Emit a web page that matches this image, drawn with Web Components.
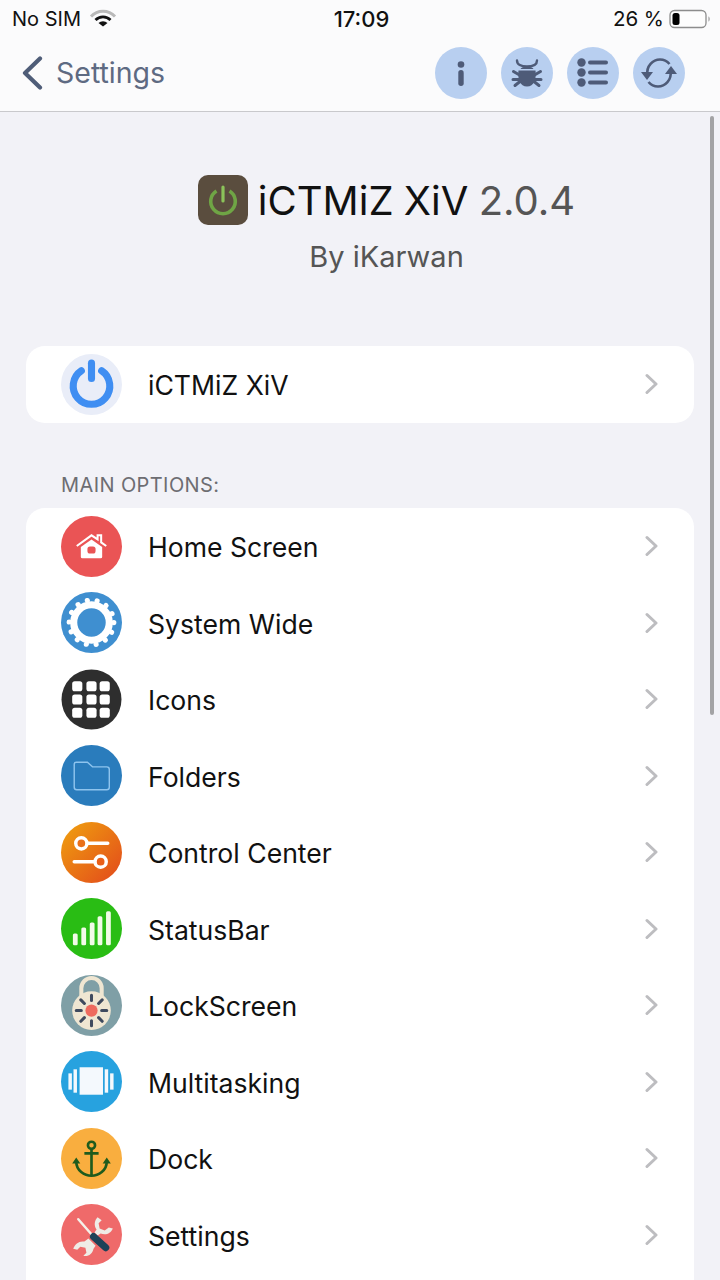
<!DOCTYPE html>
<html lang="en"><head><meta charset="utf-8"><title>iCTMiZ XiV</title>
<style>
html,body{margin:0;padding:0;background:#f2f2f7;}
body{width:720px;height:1280px;overflow:hidden;font-family:Inter,"Liberation Sans",sans-serif;position:relative;}
</style></head><body>
<app-shell>
  <nav-bar></nav-bar>
  <app-header></app-header>
  <set-group>
    <set-row label="iCTMiZ XiV"><svg viewBox="0 0 60 60"><circle cx="30" cy="30" r="30" fill="#e9edf8"/><path d="M20 16.500A18 18 0 1 0 40 16.500" fill="none" stroke="#3f8ef2" stroke-width="7" stroke-linecap="round"/><path d="M30 9V24" stroke="#3f8ef2" stroke-width="7" stroke-linecap="round"/></svg></set-row>
  </set-group>
  <set-group title="MAIN OPTIONS:">
    <set-row label="Home Screen"><svg viewBox="0 0 60 60"><circle cx="30" cy="30" r="30" fill="#ea5455"/><path d="M15.500 29.500 30 19l6 4v-4h3.500v7l5 3.500" fill="none" stroke="#fff" stroke-width="2"/><path d="M19.500 30.500 30 23l10.500 7.500V40a1.500 1.500 0 0 1-1.500 1.500H21a1.500 1.500 0 0 1-1.500-1.500z" fill="#fff"/><rect x="26" y="30" width="8" height="7" rx="2.500" fill="#ea5455"/></svg></set-row>
    <set-row label="System Wide"><svg viewBox="0 0 60 60"><circle cx="30" cy="30" r="30" fill="#3f8fd0"/><circle cx="30" cy="30" r="17.500" fill="none" stroke="#fff" stroke-width="7"/><circle cx="30" cy="30" r="22" fill="none" stroke="#fff" stroke-width="5" stroke-dasharray=".1 9.773" stroke-linecap="round"/></svg></set-row>
    <set-row label="Icons"><svg viewBox="0 0 60 60"><circle cx="30" cy="30" r="29.500" fill="#2e2e2e"/><g fill="#fff"><rect x="11" y="12" width="10" height="10" rx="2.500"/><rect x="25" y="12" width="10" height="10" rx="2.500"/><rect x="38" y="12" width="10" height="10" rx="2.500"/><rect x="11" y="25" width="10" height="10" rx="2.500"/><rect x="25" y="25" width="10" height="10" rx="2.500"/><rect x="38" y="25" width="10" height="10" rx="2.500"/><rect x="11" y="38" width="10" height="10" rx="2.500"/><rect x="25" y="38" width="10" height="10" rx="2.500"/><rect x="38" y="38" width="10" height="10" rx="2.500"/></g></svg></set-row>
    <set-row label="Folders"><svg viewBox="0 0 60 60"><circle cx="30" cy="30" r="30" fill="#2a7cbc"/><path d="M13 19a2 2 0 0 1 2-2h11l5 4.500h14a2.500 2.500 0 0 1 2.500 2.500v17.500a2.500 2.500 0 0 1-2.500 2.500H15.500a2.500 2.500 0 0 1-2.500-2.500z" fill="#2a7cbc" stroke="#8ec4ee" stroke-width="1.400"/></svg></set-row>
    <set-row label="Control Center"><svg viewBox="0 0 60 60"><defs><linearGradient id="cc" x1="0" y1="0" x2="1" y2="1"><stop offset="0" stop-color="#f0a20e"/><stop offset="1" stop-color="#e2481c"/></linearGradient></defs><circle cx="30" cy="30" r="30" fill="url(#cc)"/><path d="M26 21H46M13 39H33" stroke="#fff" stroke-width="3.400" stroke-linecap="round"/><circle cx="20" cy="21" r="5.500" fill="#e9701a" stroke="#fff" stroke-width="3.400"/><circle cx="39" cy="39" r="5.500" fill="#e9601a" stroke="#fff" stroke-width="3.400"/></svg></set-row>
    <set-row label="StatusBar"><svg viewBox="0 0 60 60"><circle cx="30" cy="30" r="30" fill="#29bd14"/><g fill="#f2fbe8"><rect x="11.700" y="35" width="4.700" height="11.500" rx="1.500"/><rect x="20" y="29" width="4.700" height="17.500" rx="1.500"/><rect x="28.300" y="24" width="4.700" height="22.500" rx="1.500"/><rect x="36" y="18" width="4.700" height="28.500" rx="1.500"/><rect x="44.300" y="13" width="4.700" height="33.500" rx="1.500"/></g></svg></set-row>
    <set-row label="LockScreen"><svg viewBox="0 0 60 60"><circle cx="30" cy="30" r="30" fill="#7f9fa6"/><path d="M20 22V13a10 10 0 0 1 20 0v9" fill="none" stroke="#efe6d2" stroke-width="4"/><circle cx="30" cy="35" r="19" fill="#efe6d2"/><circle cx="30" cy="35" r="6" fill="#ee6a5e"/><g stroke="#3f4a5e" stroke-width="3" stroke-linecap="round"><path d="M30 20v5M30 45v5M15 35h5M40 35h5M19.500 24.500l3.500 3.500M37 42l3.500 3.500M40.500 24.500 37 28M23 42l-3.500 3.500"/></g></svg></set-row>
    <set-row label="Multitasking"><svg viewBox="0 0 60 60"><circle cx="30" cy="30" r="30" fill="#27a2df"/><g fill="#f4f9fd"><rect x="18.300" y="16" width="23" height="27"/><rect x="12.300" y="18" width="3.400" height="23"/><rect x="7.300" y="22" width="3.400" height="16"/><rect x="43" y="18" width="3.400" height="23"/><rect x="48.300" y="22" width="3.400" height="16"/></g></svg></set-row>
    <set-row label="Dock"><svg viewBox="0 0 60 60"><circle cx="30" cy="30" r="30" fill="#f9ae3f"/><g fill="none" stroke="#1f5b1d" stroke-width="2.600"><circle cx="30" cy="17" r="3.500"/><path d="M30 21V47M23 25H37"/><path d="M15 33c0 9 8 14 15 14s15-5 15-14"/></g><path d="M15 29l-4 6h8zM45 29l-4 6h8z" fill="#1f5b1d"/></svg></set-row>
    <set-row label="Settings"><svg viewBox="0 0 60 60"><circle cx="30" cy="30" r="30" fill="#ef6a6a"/><path d="M36 13c-3 3-4 8-1 12l-2 3 3 3 3-2c5 2 10 0 12-5l-4-1-4 3-5-2-1-5 3-3z" fill="#efece6"/><path d="M27 34 23 37c-5-1-9 2-11 7l4 1 3-3 5 1 1 5-3 3c5 1 9-2 10-7l2-3z" fill="#efece6"/><path d="M17 15 31 31" stroke="#f4f1ea" stroke-width="2.400" stroke-linecap="round"/><path d="M32 32 44 43" stroke="#1e4258" stroke-width="7" stroke-linecap="round"/></svg></set-row>
    <set-row label=""></set-row>
  </set-group>
</app-shell>
<scroll-thumb></scroll-thumb>
<script>
function def(name,html){
  customElements.define(name,class extends HTMLElement{
    connectedCallback(){
      if(this.shadowRoot)return;
      const r=this.attachShadow({mode:'open'});
      r.innerHTML=typeof html==='function'?html(this):html;
    }
  });
}
def('app-shell',`<style>:host{display:block;height:1280px;overflow:hidden}</style><slot></slot>`);
def('nav-bar',`<style>
:host{display:block;background:#fbfbfc;border-bottom:1px solid #c9c9cc;height:111px;box-sizing:content-box;color:#111}
.status{height:37px;padding:0 9px 0 12px;display:grid;grid-template-columns:1fr auto 1fr;align-items:center;font-size:20px}
.l{display:flex;align-items:center;gap:8px}.r{display:flex;align-items:center;justify-content:flex-end;gap:5px}
.r span{font-size:20.500px}
.t{font-weight:500;font-size:22px;margin-left:0}
.bar{height:74px;display:flex;align-items:center;padding:0 35px 3px 21px;box-sizing:border-box}
.back{display:flex;align-items:center;gap:13px;color:#5e6a82;font-size:28.500px;flex:1}
.btns{display:flex;gap:14px}
.btn{width:52px;height:52px;border-radius:50%;background:#b8cff0;display:flex;align-items:center;justify-content:center}
.btn svg{width:36px;height:36px;display:block}
</style>
<div class="status"><div class="l"><span>No SIM</span><svg width="28" height="20" viewBox="0 0 28 20"><path d="M2 7.500a16.500 16.500 0 0 1 24 0" fill="none" stroke="#b9b9b9" stroke-width="3"/><path d="M6.500 11a10.500 10.500 0 0 1 15 0" fill="none" stroke="#111" stroke-width="2.800"/><path d="M14 17.500 9.500 14a6.500 6.500 0 0 1 9 0z" fill="#111"/></svg></div>
<div class="t">17:09</div>
<div class="r"><span>26 %</span><svg width="42" height="20" viewBox="0 0 42 20"><rect x="1" y="1.500" width="36" height="17" rx="4.500" fill="#fdfdfd" stroke="#8d8d8d" stroke-width="1.300"/><rect x="3.500" y="4" width="7" height="12" rx="2.500" fill="#000"/><path d="M39.500 7.500c1.500.5 1.500 4.500 0 5z" fill="#8d8d8d"/></svg></div></div>
<div class="bar"><div class="back"><svg width="22" height="34" viewBox="0 0 22 34"><path d="M19 2.500 4 17l15 14.500" fill="none" stroke="#4f5d78" stroke-width="4.200" stroke-linecap="round" stroke-linejoin="round"/></svg><span>Settings</span></div>
<div class="btns">
<div class="btn"><svg viewBox="0 0 36 36"><circle cx="18" cy="9.500" r="3.300" fill="#4e5b78"/><rect x="15.300" y="15" width="5.400" height="16" rx="2.700" fill="#4e5b78"/></svg></div>
<div class="btn"><svg viewBox="0 0 36 36" fill="none" stroke="#4e5b78" stroke-linecap="round"><path d="M8 5.500c0 4 4 6 10 6s10-2 10-6" stroke-width="2.400"/><path d="M4.500 16.500l6 3.500M31.500 16.500l-6 3.500M4 24.500h6M32 24.500h-6M6 30.500l5-4M30 30.500l-5-4" stroke-width="3"/><path d="M11.500 14c1-3.500 12-3.500 13 0z" fill="#4e5b78" stroke="none"/><path d="M9.500 15.500h17c1 9-1.500 16-8.500 16s-9.500-7-8.500-16z" fill="#4e5b78" stroke="none"/></svg></div>
<div class="btn"><svg viewBox="0 0 36 36" fill="#4e5b78"><circle cx="6.500" cy="7.500" r="4.200"/><circle cx="6.500" cy="17.500" r="4.200"/><circle cx="6.500" cy="27.500" r="4.200"/><rect x="13" y="5.500" width="20" height="4" rx="2"/><rect x="13" y="15.500" width="20" height="4" rx="2"/><rect x="13" y="25.500" width="20" height="4" rx="2"/></svg></div>
<div class="btn"><svg viewBox="0 0 36 36"><path d="M6.500 20C5 11 12 4.500 19 4.500c4 0 7 1.500 9.500 4.500" fill="none" stroke="#4e5b78" stroke-width="2.600"/><path d="M29.500 16C31 25 24 31.500 17 31.500c-4 0-7-1.500-9.500-4.500" fill="none" stroke="#4e5b78" stroke-width="2.600"/><path d="M0 17h12l-6 8zM24 19h12l-6-8z" fill="#4e5b78"/></svg></div>
</div></div>`);
def('app-header',`<style>
:host{display:block;padding:63px 0 0 53px;height:171px;box-sizing:content-box;text-align:center}
.top{display:flex;align-items:center;justify-content:center;gap:10px;height:50px}
.title{font-size:40px;color:#111;white-space:nowrap;word-spacing:-1px}.title span{color:#555}
.by{margin-top:14px;font-size:29px;color:#555;line-height:36px}
svg{width:50px;height:50px;display:block}
</style>
<div class="top"><svg viewBox="0 0 50 50"><rect width="50" height="50" rx="10" fill="#5a4d3e"/><path d="M18.500 16a12.300 12.300 0 1 0 13 0" fill="none" stroke="#6fa545" stroke-width="3.600"/><path d="M25 12v14" stroke="#8bc35a" stroke-width="3.200" stroke-linecap="round"/></svg><div class="title">iCTMiZ XiV <span>2.0.4</span></div></div>
<div class="by">By iKarwan</div>`);
def('set-group',h=>`<style>
:host{display:block;margin:0 26px}
.h{font-size:20px;color:#6d6d72;padding:0 0 0 35px;height:35.500px;line-height:24px;margin-top:50px;letter-spacing:.4px;box-sizing:border-box}
.c{background:#fff;border-radius:19px;overflow:hidden}
</style>${h.getAttribute('title')?`<div class="h">${h.getAttribute('title')}</div>`:''}<div class="c"><slot></slot></div>`);
def('set-row',h=>`<style>
:host{display:block;height:76.500px}
.row{height:100%;display:flex;align-items:center;padding:0 36px 0 35px;gap:26px;font-size:26.600px;color:#111}
::slotted(svg){width:61px;height:61px;display:block}
.ic{width:61px;height:61px;flex:none}
.lab{flex:1;white-space:nowrap;padding-top:2px}
.chev{flex:none}
</style><div class="row"><div class="ic"><slot></slot></div><span class="lab">${h.getAttribute('label')}</span>
<svg class="chev" width="13" height="22" viewBox="0 0 13 22"><path d="M2 2.500 11 11l-9 8.500" fill="none" stroke="#bdbdc0" stroke-width="3" stroke-linecap="round" stroke-linejoin="round"/></svg></div>`);
def('scroll-thumb',`<style>:host{display:block;position:absolute;left:710px;top:116px;width:4px;height:599px;background:#a3a3a5;border-radius:2px}</style>`);
</script>
</body></html>
